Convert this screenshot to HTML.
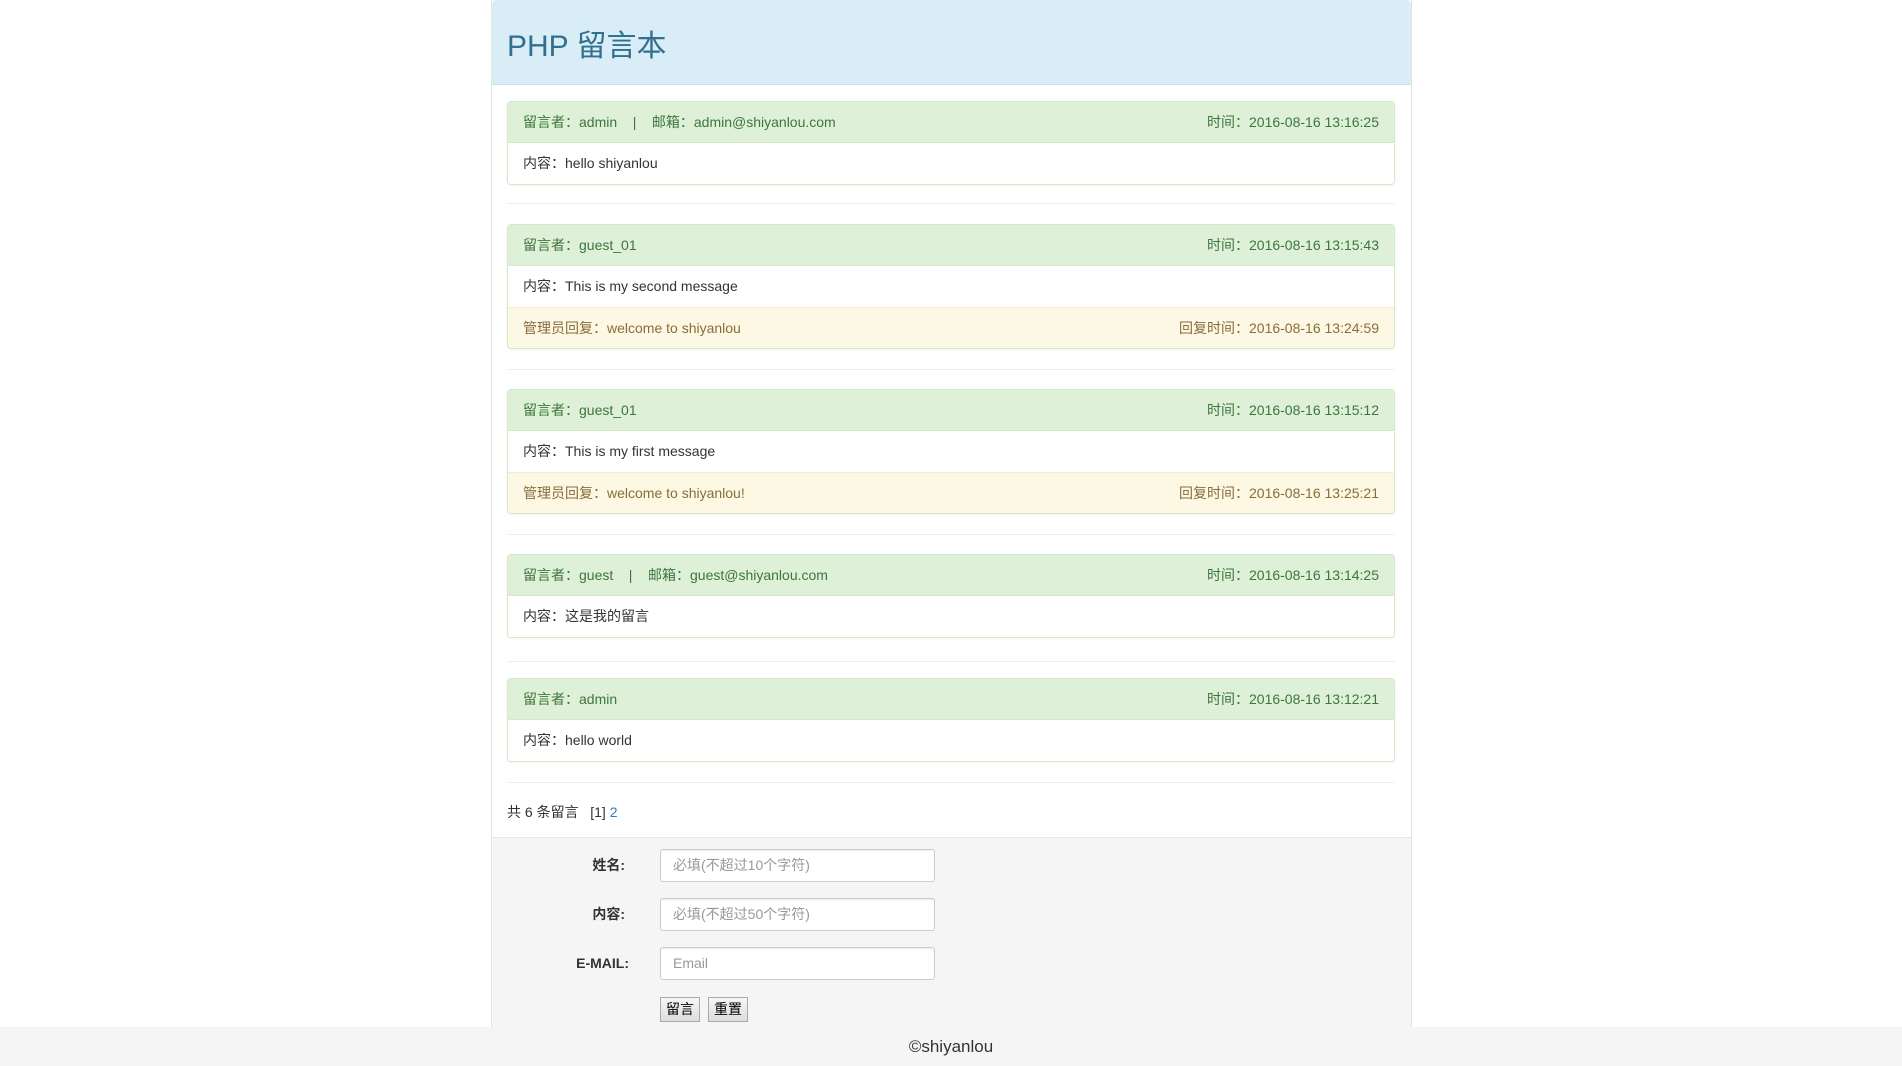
<!DOCTYPE html>
<html><head><meta charset="utf-8"><style>
*{box-sizing:border-box;margin:0;padding:0}
body{width:1902px;height:1066px;background:#fff;font-family:"Liberation Sans","Noto Sans CJK SC",sans-serif;font-size:14px;color:#333;position:relative;overflow:hidden}
.wrap{position:absolute;left:491px;top:0;width:921px;height:1027px;border-left:1px solid #e4e4e4;border-right:1px solid #e4e4e4}
.head{height:85px;background:#d9edf7;border-bottom:1px solid #bce8f1;border-radius:4px 4px 0 0;padding-left:15px;color:#31708f;font-size:30px;line-height:94px}
.panel{position:absolute;left:15px;width:888px;border:1px solid #d6e9c6;border-radius:4px;box-shadow:0 1px 2px rgba(0,0,0,.05);overflow:hidden}
.row{height:41px;line-height:41px;padding:0 15px;display:flex;justify-content:space-between}
.h{background:#dff0d8;color:#3c763d;border-bottom:1px solid #d6e9c6}
.b{background:#fff;color:#333}
.r{background:#fcf8e3;color:#8a6d3b;border-top:1px solid #faebcc}
.hr{position:absolute;left:15px;width:888px;height:1px;background:#eee}
.form{position:absolute;left:0;top:837px;width:919px;height:190px;background:#f5f5f5;border-top:1px solid #e8e8e8}
.lbl{position:absolute;width:133px;text-align:right;font-weight:bold;color:#333;left:0}
.inp{position:absolute;left:168px;width:275px;height:33px;border:1px solid #ccc;border-radius:3px;background:#fff;color:#999;padding-left:12px;line-height:31px;font-size:14px;box-shadow:inset 0 1px 1px rgba(0,0,0,.075)}
.btn{position:absolute;top:159px;height:25px;border:1px solid #aaa;background:linear-gradient(#f6f6f6,#ddd);font-size:14px;line-height:23px;padding:0 5px;color:#000}
.foot{position:absolute;left:0;top:1027px;width:1902px;height:39px;background:#f5f5f5;text-align:center;line-height:39px;font-size:17px;color:#333}
</style></head><body>
<div class="wrap">
<div class="head">PHP 留言本</div>
<div class="panel" style="top:101px"><div class="row h"><span>留言者：admin &nbsp;&nbsp; | &nbsp;&nbsp; 邮箱：admin@shiyanlou.com</span><span>时间：2016-08-16 13:16:25</span></div><div class="row b"><span>内容：hello shiyanlou</span></div></div>
<div class="hr" style="top:203px"></div>
<div class="panel" style="top:224px"><div class="row h"><span>留言者：guest_01</span><span>时间：2016-08-16 13:15:43</span></div><div class="row b"><span>内容：This is my second message</span></div><div class="row r"><span>管理员回复：welcome to shiyanlou</span><span>回复时间：2016-08-16 13:24:59</span></div></div>
<div class="hr" style="top:369px"></div>
<div class="panel" style="top:389px"><div class="row h"><span>留言者：guest_01</span><span>时间：2016-08-16 13:15:12</span></div><div class="row b"><span>内容：This is my first message</span></div><div class="row r"><span>管理员回复：welcome to shiyanlou!</span><span>回复时间：2016-08-16 13:25:21</span></div></div>
<div class="hr" style="top:534px"></div>
<div class="panel" style="top:554px"><div class="row h"><span>留言者：guest &nbsp;&nbsp; | &nbsp;&nbsp; 邮箱：guest@shiyanlou.com</span><span>时间：2016-08-16 13:14:25</span></div><div class="row b"><span>内容：这是我的留言</span></div></div>
<div class="hr" style="top:661px"></div>
<div class="panel" style="top:678px"><div class="row h"><span>留言者：admin</span><span>时间：2016-08-16 13:12:21</span></div><div class="row b"><span>内容：hello world</span></div></div>
<div class="hr" style="top:782px"></div>
<div style="position:absolute;left:15px;top:802px;line-height:20px">共 6 条留言 &nbsp; [1] <span style="color:#337ab7">2</span></div>
<div class="form">
<div class="lbl" style="top:11px;line-height:33px">姓名:</div><div class="inp" style="top:11px">必填(不超过10个字符)</div>
<div class="lbl" style="top:60px;line-height:33px">内容:</div><div class="inp" style="top:60px">必填(不超过50个字符)</div>
<div class="lbl" style="top:109px;line-height:33px;width:137px">E-MAIL:</div><div class="inp" style="top:109px">Email</div>
<div class="btn" style="left:168px">留言</div><div class="btn" style="left:216px">重置</div>
</div>
</div>
<div class="foot">©shiyanlou</div>
</body></html>
